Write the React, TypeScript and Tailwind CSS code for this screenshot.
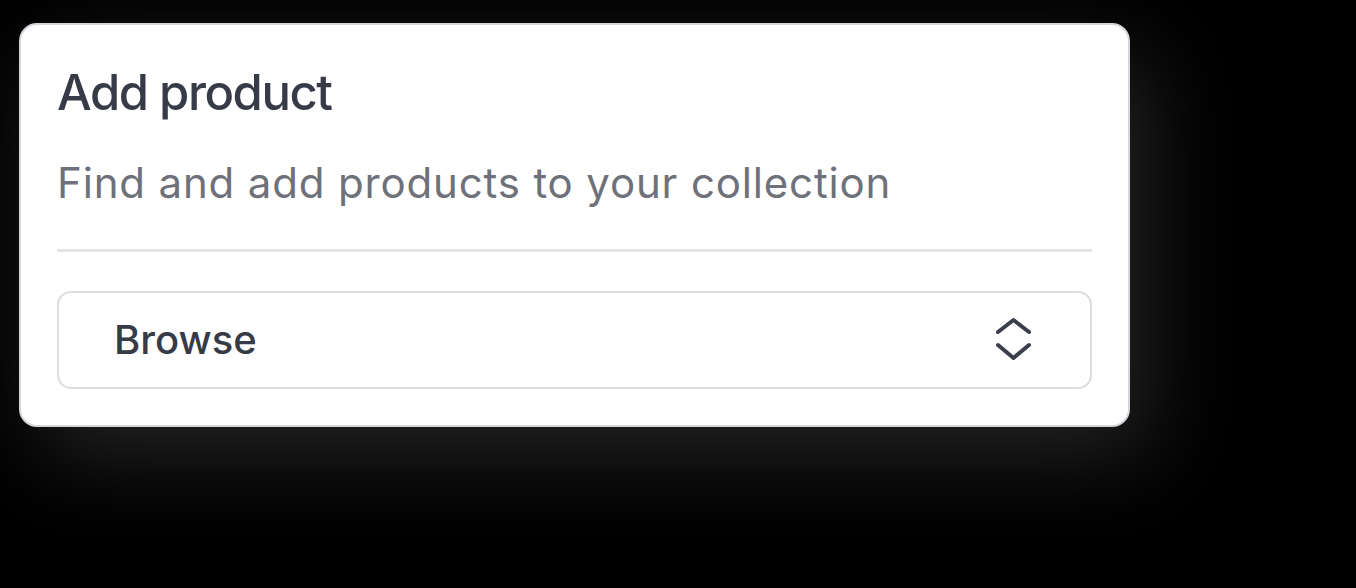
function UpDownIcon() {
  return (
    <svg width="40" height="52" viewBox="0 0 40 52" fill="none" className="text-[#3a3f4b]">
      <path d="M5 18 L20.5 6 L36 18" stroke="currentColor" strokeWidth="4" strokeLinecap="round" strokeLinejoin="round" />
      <path d="M5 31 L20.5 44 L36 31" stroke="currentColor" strokeWidth="4" strokeLinecap="round" strokeLinejoin="round" />
    </svg>
  );
}

export default function App() {
  return (
    <div className="h-[588px] w-full bg-black pl-[19px] pt-[23px] font-['Inter',sans-serif]">
      <div className="w-[1111px] rounded-[18px] border-2 border-[#d4d6db] bg-white px-[36px] pt-[38px] pb-[36px] shadow-[20px_30px_90px_rgba(255,255,255,0.14)]">
        <h1 className="text-[49px] font-medium leading-[1.22] tracking-[-0.03em] text-[#363b47]">Add product</h1>
        <p className="mt-[35px] text-[42px] leading-[1.2] tracking-[0.02em] text-[#6e717a]">Find and add products to your collection</p>
        <div className="mt-[41px] h-[3px] bg-[#e3e4e7]" />
        <button className="mt-[39px] flex h-[98px] w-full items-center justify-between rounded-[14px] border-2 border-[#dcdde1] pl-[55px] pr-[57px]">
          <span className="text-[40px] font-medium leading-none text-[#363b47]">Browse</span>
          <UpDownIcon />
        </button>
      </div>
    </div>
  );
}
